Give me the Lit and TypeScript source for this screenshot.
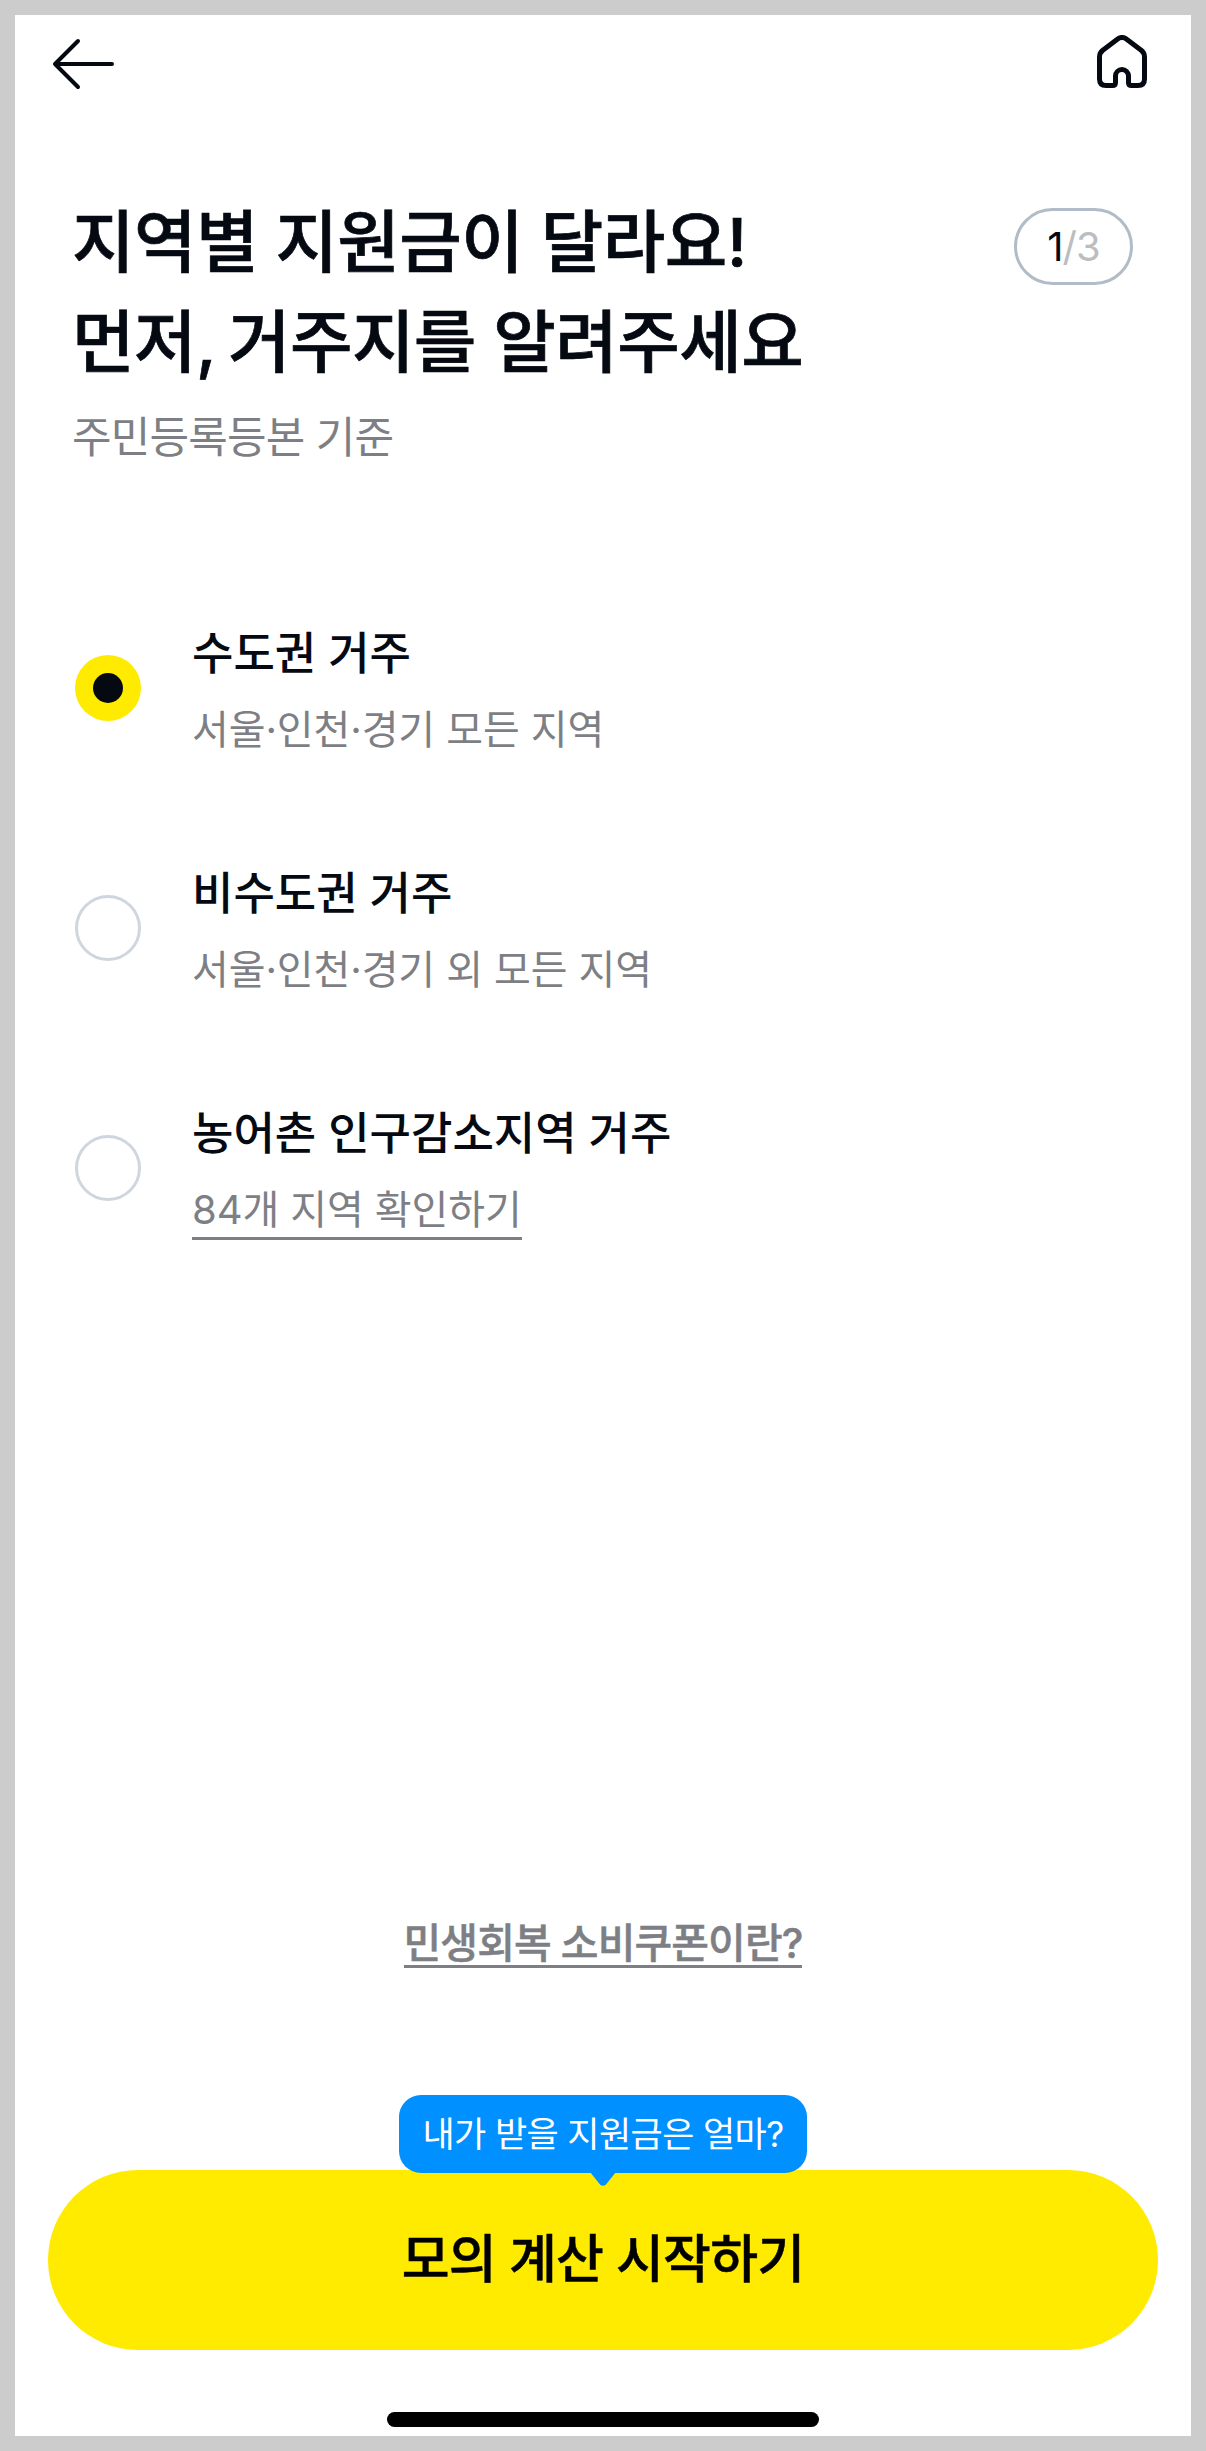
import { LitElement, html, css } from 'lit';
import { customElement, state } from 'lit/decorators.js';
import { classMap } from 'lit/directives/class-map.js';

interface Region {
  title: string;
  sub: string;
  link?: boolean;
}

const REGIONS: Region[] = [
  { title: '수도권 거주', sub: '서울·인천·경기 모든 지역' },
  { title: '비수도권 거주', sub: '서울·인천·경기 외 모든 지역' },
  { title: '농어촌 인구감소지역 거주', sub: '84개 지역 확인하기', link: true },
];

@customElement('app-root')
export class AppRoot extends LitElement {
  static styles = css`
    :host {
      display: block;
      --ink: #050a12;
      --muted: #7d7f85;
      --yellow: #ffeb00;
      font-family: Inter, 'Noto Sans CJK KR', sans-serif;
      color: var(--ink);
    }

    .frame {
      box-sizing: border-box;
      width: 1206px;
      height: 2451px;
      border: 15px solid #cccccc;
      background: #ffffff;
      display: flex;
      flex-direction: column;
      overflow: hidden;
    }

    .topbar {
      display: flex;
      justify-content: space-between;
      align-items: center;
      height: 78px;
      padding: 10px 44px 0 37px;
      flex: none;
    }

    .topbar svg {
      display: block;
      fill: none;
      stroke: var(--ink);
      stroke-linecap: round;
      stroke-linejoin: round;
    }

    .topbar .home {
      margin-bottom: 5px;
    }

    .head {
      display: flex;
      justify-content: space-between;
      align-items: flex-start;
      padding: 89px 58px 0 57px;
    }

    h1 {
      margin: 0;
      font-size: 68px;
      line-height: 100px;
      font-weight: 500;
      -webkit-text-stroke: 0.7px currentColor;
      letter-spacing: -0.6px;
    }

    .comma {
      letter-spacing: -3px;
    }

    .step {
      box-sizing: border-box;
      width: 119px;
      height: 77px;
      margin-top: 16px;
      border: 3px solid #b0bcc8;
      border-radius: 39px;
      display: flex;
      align-items: center;
      justify-content: center;
      font-size: 40px;
      color: #bbbdc0;
      letter-spacing: -1px;
    }

    .step b {
      font-weight: 400;
      color: var(--ink);
    }

    .basis {
      margin: 17px 0 0 57px;
      font-size: 43px;
      line-height: 56px;
      letter-spacing: -0.8px;
      color: var(--muted);
    }

    .options {
      display: flex;
      flex-direction: column;
      gap: 110px;
      margin-top: 158px;
      padding-left: 60px;
    }

    .option {
      display: flex;
      align-items: center;
      gap: 52px;
      height: 130px;
    }

    .radio {
      box-sizing: border-box;
      width: 66px;
      height: 66px;
      border-radius: 50%;
      border: 3px solid #d0d6df;
      flex: none;
      display: flex;
      align-items: center;
      justify-content: center;
    }

    .radio.on {
      border: none;
      background: var(--yellow);
    }

    .radio.on::after {
      content: '';
      width: 30px;
      height: 30px;
      border-radius: 50%;
      background: var(--ink);
    }

    .text {
      padding-top: 3px;
    }

    .label {
      margin-left: -1px;
      font-size: 45px;
      line-height: 60px;
      font-weight: 500;
    }

    .sub {
      margin-top: 21px;
      margin-left: -1px;
      font-size: 40px;
      line-height: 50px;
      letter-spacing: -0.1px;
      color: var(--muted);
    }

    .sub.link span {
      display: inline-block;
      padding-bottom: 2px;
      margin-bottom: -5px;
      border-bottom: 3px solid var(--muted);
      line-height: 50px;
    }

    .bottom {
      margin-top: auto;
      display: flex;
      flex-direction: column;
      align-items: center;
    }

    .what {
      font-size: 41px;
      line-height: 44px;
      font-weight: 500;
      -webkit-text-stroke: 0.5px currentColor;
      letter-spacing: -0.9px;
      color: var(--muted);
      border-bottom: 3px solid var(--muted);
    }

    .cta {
      position: relative;
      box-sizing: border-box;
      width: 1110px;
      height: 180px;
      margin-top: 202px;
      padding-bottom: 10px;
      border-radius: 90px;
      background: var(--yellow);
      display: flex;
      align-items: center;
      justify-content: center;
      font-size: 52px;
      font-weight: 500;
      -webkit-text-stroke: 0.5px currentColor;
      letter-spacing: -0.8px;
      color: #000000;
    }

    .tip {
      position: absolute;
      top: -75px;
      left: 351px;
      box-sizing: border-box;
      width: 408px;
      height: 78px;
      padding-bottom: 6px;
      border-radius: 22px;
      background: #0090ff;
      color: #ffffff;
      display: flex;
      align-items: center;
      justify-content: center;
      font-size: 35px;
      font-weight: 400;
      -webkit-text-stroke: 0;
      letter-spacing: -0.6px;
    }

    .tip svg {
      position: absolute;
      left: 191px;
      top: 77px;
      display: block;
    }

    .home-bar {
      width: 432px;
      height: 15px;
      margin: 62px 0 9px;
      border-radius: 8px;
      background: #000000;
    }
  `;

  @state() private selected = 0;

  render() {
    return html`
      <div class="frame">
        <div class="topbar">
          <svg width="62" height="52" viewBox="0 0 62 52" stroke-width="4">
            <path d="M26 3 L3 26 L26 49 M3 26 H60"></path>
          </svg>
          <svg class="home" width="50" height="53" viewBox="0 0 50 53" stroke-width="5">
            <path
              d="M20 4.500 Q25 .5 30 4.500 L44.500 15.500 Q47.500 18 47.500 22 V44 Q47.500 50.500 41 50.500 H34.500 Q31.500 50.500 31.500 47.500 V41 A6.500 6.500 0 0 0 18.500 41 V47.500 Q18.500 50.500 15.500 50.500 H9 Q2.500 50.500 2.500 44 V22 Q2.500 18 5.500 15.500 Z"
            ></path>
          </svg>
        </div>

        <div class="head">
          <h1>지역별 지원금이 달라요!<br />먼저<span class="comma">, </span>거주지를 알려주세요</h1>
          <div class="step"><b>1</b>/3</div>
        </div>
        <div class="basis">주민등록등본 기준</div>

        <div class="options">
          ${REGIONS.map(
            (r, i) => html`
              <div class="option" @click=${() => (this.selected = i)}>
                <div class=${classMap({ radio: true, on: this.selected === i })}></div>
                <div class="text">
                  <div class="label">${r.title}</div>
                  <div class=${classMap({ sub: true, link: !!r.link })}><span>${r.sub}</span></div>
                </div>
              </div>
            `
          )}
        </div>

        <div class="bottom">
          <div class="what">민생회복 소비쿠폰이란?</div>
          <div class="cta">
            모의 계산 시작하기
            <div class="tip">
              내가 받을 지원금은 얼마?
              <svg width="26" height="15" viewBox="0 0 26 15">
                <path d="M0 0 H26 L16 12.500 Q13 15 10 12.500 Z" fill="#0090ff"></path>
              </svg>
            </div>
          </div>
          <div class="home-bar"></div>
        </div>
      </div>
    `;
  }
}
